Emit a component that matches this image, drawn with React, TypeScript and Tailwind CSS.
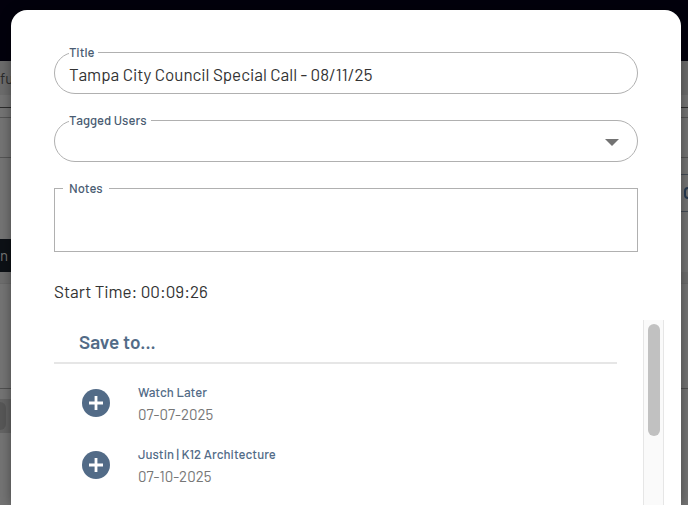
import { ReactNode } from "react";

interface SaveTarget {
  id: string;
  name: string;
  date: string;
}

const saveTargets: SaveTarget[] = [
  { id: "watch-later", name: "Watch Later", date: "07-07-2025" },
  { id: "k12", name: "Justin | K12 Architecture", date: "07-10-2025" },
];

interface OutlinedFieldProps {
  id: string;
  label: string;
  rounded?: boolean;
  children: ReactNode;
}

const OutlinedField = ({ id, label, rounded, children }: OutlinedFieldProps) => (
  <fieldset
    className={`min-w-0 border border-[#b0b0b0] ${rounded ? "rounded-[21px] pl-[14px] pr-[18px]" : "pl-2 pr-4"}`}
  >
    <legend className={`h-4 text-[13px] leading-4 font-medium text-[#4a5c72] ${rounded ? "pr-1" : "px-1.5"}`}>
      <label htmlFor={id}>{label}</label>
    </legend>
    {children}
  </fieldset>
);

const AddButton = ({ name }: { name: string }) => (
  <button type="button" aria-label={`Save to ${name}`} className="size-7 shrink-0 rounded-full bg-[#526b87]">
    <svg viewBox="0 0 28 28" className="size-7" fill="none" stroke="#fff" strokeWidth="2.8">
      <path d="M14 7v14M7 14h14" />
    </svg>
  </button>
);

const PageBehind = () => (
  <div className="flex min-h-screen flex-col overflow-hidden bg-[#747474] text-[15px] text-[#2a2a2a]" aria-hidden="true">
    <div className="h-[61px] bg-[#02000c]" />
    <div className="flex h-[34px] items-center bg-[#6c6c6c] whitespace-nowrap">fur</div>
    <div className="h-[13px] border-b border-[#2c2c2c]" />
    <div className="h-2.5 border-b border-[#555]" />
    <div className="h-10 border-b border-[#555]" />
    <div className="flex h-[81px] justify-end pt-4">
      <div className="flex h-[38px] w-2 items-center overflow-hidden border-y border-[#444b55] pl-1">
        <div className="h-3 w-2 shrink-0 rounded-full border-2 border-[#26384f]" />
      </div>
    </div>
    <div className="flex h-[33px] w-40 items-center bg-[#0d1116] text-[#777]">n</div>
    <div className="h-3 border-b border-[#696969] bg-[#6e6e6e]" />
    <div className="h-[105px] border-b border-[#505050]" />
    <div className="flex h-11 items-end">
      <div className="flex h-[34px] w-40 items-center bg-[#646464]">
        <div className="h-7 w-1.5 rounded-r-full bg-[#575757]" />
      </div>
    </div>
  </div>
);

const SaveDialog = () => (
  <div
    role="dialog"
    aria-label="Save clip"
    className="flex flex-1 flex-col rounded-t-2xl bg-white pt-[34px] pl-[43px] shadow-[0_0_12px_rgba(0,0,0,0.4)]"
  >
    <form className="mr-[43px] flex flex-col gap-[18px]">
      <OutlinedField id="title" label="Title" rounded>
        <input
          id="title"
          type="text"
          defaultValue="Tampa City Council Special Call - 08/11/25"
          className="mb-[5px] block h-7 w-full bg-transparent text-[17px] text-[#333] outline-none"
        />
      </OutlinedField>
      <OutlinedField id="tagged" label="Tagged Users" rounded>
        <div className="flex h-[33px] items-center">
          <select id="tagged" className="h-8 w-full appearance-none bg-transparent text-base outline-none" />
          <svg viewBox="0 0 14 7" className="pointer-events-none mb-1 h-[7px] w-[14px] shrink-0" fill="#737373">
            <path d="M0 0h14L7 7z" />
          </svg>
        </div>
      </OutlinedField>
      <OutlinedField id="notes" label="Notes">
        <textarea id="notes" className="block h-[55px] w-full resize-none bg-transparent text-base outline-none" />
      </OutlinedField>
    </form>
    <p className="mt-[27px] text-[17px] leading-6 text-[#333]">Start Time: 00:09:26</p>

    <div className="mt-[17px] mr-[17px] flex flex-1 justify-between">
      <section className="mr-[26px] flex-1">
        <h2 className="h-11 border-b-2 border-[#e6e6e6] pl-[25px] text-[19px] leading-[44px] font-semibold text-[#526b87]">
          Save to...
        </h2>
        <ul className="flex flex-col gap-[18px] pt-[17px] pl-7">
          {saveTargets.map((target) => (
            <li key={target.id} className="flex h-11 items-center gap-7">
              <AddButton name={target.name} />
              <div>
                <div className="text-[13px] leading-[22px] font-medium text-[#526b87]">{target.name}</div>
                <div className="text-[15px] leading-[22px] text-[#777]">{target.date}</div>
              </div>
            </li>
          ))}
        </ul>
      </section>
      <div className="w-[21px] border-x border-[#e6e6e6] bg-[#fafafa] px-1 pt-1">
        <div className="mx-auto h-28 w-3 rounded-full bg-[#c1c1c1]" />
      </div>
    </div>
  </div>
);

export default function App() {
  return (
    <main className="relative min-h-screen font-['Barlow','Roboto',sans-serif]">
      <PageBehind />
      <div className="absolute inset-0 flex pt-2.5 pr-[7px] pl-[11px]">
        <SaveDialog />
      </div>
    </main>
  );
}
